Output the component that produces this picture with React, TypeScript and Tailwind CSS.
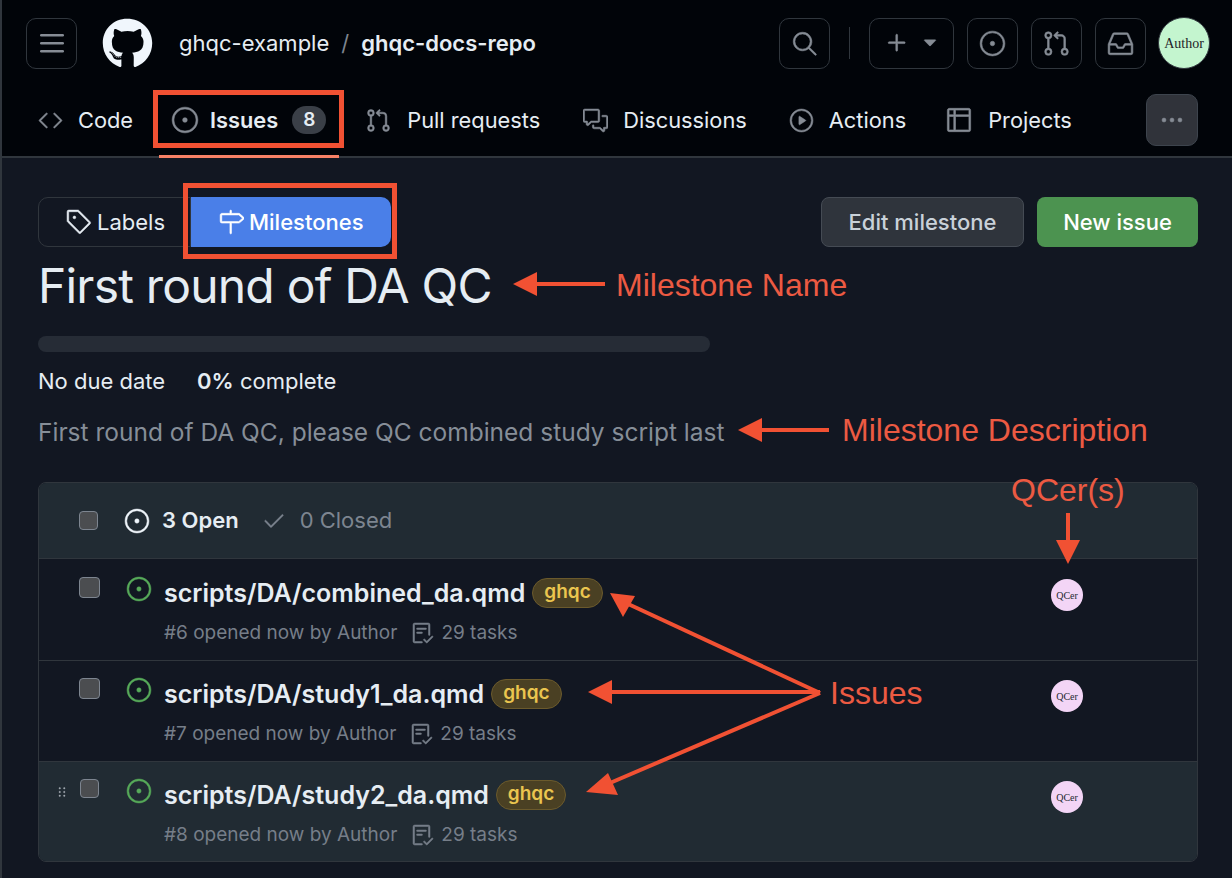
import { ReactNode } from "react";
import { IconContext } from "react-icons";
import { FaGithub } from "react-icons/fa";
import {
  GoCheck,
  GoChecklist,
  GoCode,
  GoCommentDiscussion,
  GoGitPullRequest,
  GoGrabber,
  GoInbox,
  GoIssueOpened,
  GoKebabHorizontal,
  GoMilestone,
  GoPlay,
  GoPlus,
  GoSearch,
  GoTable,
  GoTag,
  GoTriangleDown,
} from "react-icons/go";

const ARROW = "#f15133";

const IconButton = ({ children, className = "w-[51px]" }: { children: ReactNode; className?: string }) => (
  <div className={`flex h-[51px] items-center justify-center rounded-[10px] border border-[#30363d] text-[#868c95] ${className}`}>
    {children}
  </div>
);

const NavItem = ({ icon, label, className = "gap-[15px]", children }: { icon: ReactNode; label: string; className?: string; children?: ReactNode }) => (
  <div className={`flex items-center text-[21.8px] text-[#e6edf3] ${className}`}>
    <span className="text-[#868c95]">{icon}</span>
    <span>{label}</span>
    {children}
  </div>
);

const Avatar = () => (
  <div className="flex h-8 w-8 items-center justify-center rounded-full bg-[#f3d5f6] font-['Liberation_Serif',serif] text-[10px] text-[#24292f]">
    QCer
  </div>
);

const IssueRow = ({ title, num, rowClass, hovered }: { title: string; num: number; rowClass: string; hovered?: boolean }) => (
  <div className={`relative flex border-t border-[#30363d] ${rowClass} ${hovered ? "bg-[#212b33]" : ""}`}>
    {hovered && <GoGrabber size={18} className="absolute left-[14px] top-[21px] text-[#b4bac2]" />}
    <div
      className={`mt-[17px] rounded-[4px] border border-[#7d8590] bg-[#4b4d50] ${
        hovered ? "ml-[41px] mr-[1px] h-[19px] w-[19px]" : "ml-10 h-[21px] w-[21px]"
      }`}
    />
    <GoIssueOpened size={26} className="ml-[26px] mt-[16px] text-[#57ab5a]" />
    <div className="ml-[12px] flex w-[887px] flex-col">
      <div className="mt-[17px] flex h-[34px] items-center gap-[7px]">
        <span className="text-[25px] font-semibold text-[#e6edf3]">{title}</span>
        <span className="mb-[3px] flex h-[30px] items-center rounded-full border border-[#6b5a2c] bg-[#4a4023] px-[11px] text-[19px] font-semibold text-[#eac54f]">
          ghqc
        </span>
      </div>
      <div className="mt-[8px] flex items-center gap-[14px] text-[19px] text-[#767e89]">
        <span>#{num} opened now by Author</span>
        <span className="flex items-center gap-[6px]">
          <GoChecklist size={24} />
          29 tasks
        </span>
      </div>
    </div>
    <div className="mt-[19px]">
      <Avatar />
    </div>
  </div>
);

// the red annotation layer drawn over the screenshot
const Annotations = () => (
  <>
    <div className="absolute left-[153px] top-[90px] h-[58px] w-[191px] border-[5px] border-[#f15133]" />
    <div className="absolute left-[183px] top-[183px] h-[76px] w-[214px] border-[5px] border-[#f15133]" />
    <svg className="absolute left-0 top-0" width="1232" height="878" fill={ARROW} stroke="none">
      <polygon points="513,284 537,272 537,296" />
      <rect x="535" y="282" width="70" height="4" />
      <polygon points="738,430 762,418 762,442" />
      <rect x="760" y="428" width="69" height="4" />
      <polygon points="1068,564 1056,540 1080,540" />
      <rect x="1066" y="513" width="4" height="29" />
      <polygon points="610,593 635,596 623,617" />
      <line x1="626" y1="603" x2="820" y2="693" stroke={ARROW} strokeWidth="4" />
      <polygon points="588,692 612,680 612,704" />
      <rect x="610" y="690" width="210" height="4" />
      <polygon points="586,792 608,773 618,795" />
      <line x1="610" y1="783" x2="820" y2="693" stroke={ARROW} strokeWidth="4" />
    </svg>
    <span className="absolute left-[616px] top-[267px] font-['Liberation_Sans',sans-serif] text-[32px] leading-[36px] text-[#ec5a42]">Milestone Name</span>
    <span className="absolute left-[842px] top-[412px] font-['Liberation_Sans',sans-serif] text-[32px] leading-[36px] text-[#ec5a42]">Milestone Description</span>
    <span className="absolute left-[1011px] top-[472px] font-['Liberation_Sans',sans-serif] text-[32px] leading-[36px] text-[#ec5a42]">QCer(s)</span>
    <span className="absolute left-[830px] top-[675px] font-['Liberation_Sans',sans-serif] text-[32px] leading-[36px] text-[#ec5a42]">Issues</span>
  </>
);

export default function App() {
  return (
    <IconContext.Provider value={{ attr: { strokeWidth: "0.5" } }}>
      <div className="relative h-[878px] w-[1232px] overflow-hidden bg-[#121722] font-['Inter',sans-serif] text-[#e6edf3]">
        <header className="h-[158px] border-b-2 border-[#30363d] bg-[#010409]">
          <div className="flex items-center pl-[26px] pr-[22px] pt-[17px]">
            <IconButton>
              <svg width="24" height="24" viewBox="0 0 24 24" fill="currentColor">
                <rect x="0" y="3" width="24" height="2.4" rx="1.2" />
                <rect x="0" y="11" width="24" height="2.4" rx="1.2" />
                <rect x="0" y="19" width="24" height="2.4" rx="1.2" />
              </svg>
            </IconButton>
            <FaGithub size={51} className="ml-[25px] text-[#f0f6fc]" />
            <div className="ml-[26px] flex items-center gap-[12px] text-[22px]">
              <span>ghqc-example</span>
              <span className="text-[#7d8590]">/</span>
              <span className="font-semibold">ghqc-docs-repo</span>
            </div>
            <div className="ml-auto flex items-center gap-[13px]">
              <IconButton>
                <GoSearch size={27} />
              </IconButton>
              <div className="mx-[6px] h-[32px] w-px bg-[#30363d]" />
              <IconButton className="w-[85px] gap-[8px]">
                <GoPlus size={28} />
                <GoTriangleDown size={22} />
              </IconButton>
              <IconButton>
                <GoIssueOpened size={27} />
              </IconButton>
              <IconButton>
                <GoGitPullRequest size={27} />
              </IconButton>
              <IconButton>
                <GoInbox size={27} />
              </IconButton>
              <div className="-ml-px flex h-[52px] w-[52px] items-center justify-center rounded-full border border-[#30363d] bg-[#c4f5cf] font-['Liberation_Serif',serif] text-[14px] text-[#1f2328]">
                Author
              </div>
            </div>
          </div>
          <nav className="mt-[25px] flex items-center gap-[43px] pl-[38px] pr-[34px]">
            <NavItem icon={<GoCode size={25} />} label="Code" />
            <NavItem icon={<GoIssueOpened size={28} />} label="Issues" className="-ml-[5px] gap-[11px] font-semibold">
              <span className="ml-[3px] flex h-[28px] w-[34px] items-center justify-center rounded-full bg-[#3a3f47] text-[19px] font-semibold">8</span>
            </NavItem>
            <NavItem icon={<GoGitPullRequest size={25} />} label="Pull requests" className="-ml-[3px] gap-[16px]" />
            <NavItem icon={<GoCommentDiscussion size={25} />} label="Discussions" />
            <NavItem icon={<GoPlay size={25} />} label="Actions" className="-ml-px gap-[15px]" />
            <NavItem icon={<GoTable size={28} className="-mx-[1.5px]" />} label="Projects" className="-ml-[3px] gap-[17px]" />
            <div className="ml-auto flex h-[52px] w-[52px] items-center justify-center rounded-[10px] border border-[#3d444d] bg-[#30333a] text-[#868c95]">
              <GoKebabHorizontal size={24} />
            </div>
          </nav>
        </header>
        <div className="absolute left-[159px] top-[155px] h-[3px] w-[180px] bg-[#f78166]" />
        <div className="absolute left-0 top-0 h-full w-[2px] bg-[#30363d]" />

        <main className="pl-[38px] pr-[34px]">
          <div className="mt-[39px] flex items-center justify-between">
            <div className="flex h-[50px] text-[22px]">
              <div className="flex w-[153px] items-center gap-[5px] rounded-l-[10px] border border-[#30363d] pl-[27px]">
                <GoTag size={26} />
                Labels
              </div>
              <div className="flex w-[200px] items-center gap-[5px] rounded-r-[10px] bg-[#4a7fe8] pl-[27px] font-medium text-white">
                <GoMilestone size={26} />
                Milestones
              </div>
            </div>
            <div className="flex gap-[13px] text-[22px] font-medium">
              <div className="flex h-[50px] w-[203px] items-center justify-center rounded-[8px] border border-[#454b54] bg-[#2f343c] text-[#c9d1d9]">
                Edit milestone
              </div>
              <div className="flex h-[50px] w-[161px] items-center justify-center rounded-[8px] bg-[#4c9350] text-white">
                New issue
              </div>
            </div>
          </div>

          <h1 className="mt-[10px] text-[48px] leading-[58px] tracking-[-0.8px]">First round of DA QC</h1>

          <div className="mt-[21px] h-4 w-[672px] rounded-full bg-[#262c36]" />

          <div className="mt-4 flex gap-8 text-[22px] leading-[26px]">
            <span>No due date</span>
            <span>
              <span className="font-semibold">0%</span> complete
            </span>
          </div>

          <p className="mt-[23px] text-[24.5px] leading-[30px] text-[#868e98]">First round of DA QC, please QC combined study script last</p>

          <section className="mt-[35px] overflow-hidden rounded-[8px] border border-[#30363d]">
            <div className="flex h-[75px] items-center bg-[#212b33] pl-10 text-[22px]">
              <div className="h-[19px] w-[19px] rounded-[4px] border border-[#7d8590] bg-[#4b4d50]" />
              <GoIssueOpened size={26} className="ml-[26px] text-[#f0f6fc]" />
              <span className="ml-[12px] font-semibold">3 Open</span>
              <GoCheck size={24} className="ml-[23px] text-[#7d8590]" />
              <span className="ml-[14px] text-[#7d8590]">0 Closed</span>
            </div>
            <IssueRow title="scripts/DA/combined_da.qmd" num={6} rowClass="h-[102px] pt-px" />
            <IssueRow title="scripts/DA/study1_da.qmd" num={7} rowClass="h-[101px]" />
            <IssueRow title="scripts/DA/study2_da.qmd" num={8} rowClass="h-[100px]" hovered />
          </section>
        </main>

        <Annotations />
      </div>
    </IconContext.Provider>
  );
}
